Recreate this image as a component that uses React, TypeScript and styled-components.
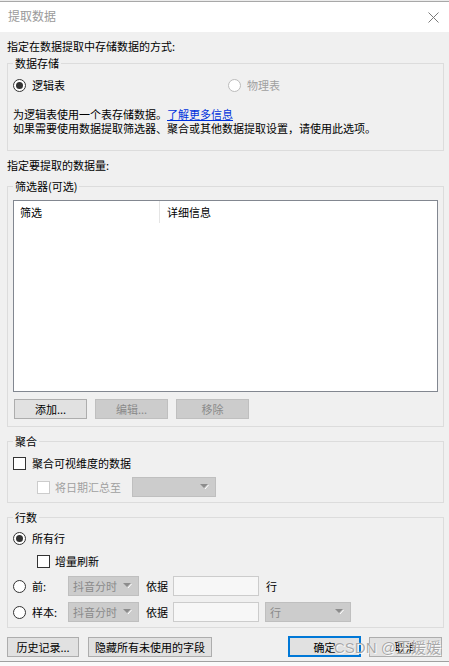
import React from 'react';
import styled, { createGlobalStyle } from 'styled-components';

const GlobalStyle = createGlobalStyle`
  html, body {
    margin: 0;
    padding: 0;
    background: #fafafa;
  }
  body {
    font-family: 'Noto Sans CJK SC', 'Noto Sans', sans-serif;
    font-size: 11px;
    color: #000000;
  }
`;

const Window = styled.div`
  position: relative;
  width: 449px;
  display: flex;
  flex-direction: column;
`;

const TopEdge = styled.div`
  height: 1px;
  background: #ececec;
  border-bottom: 1px solid #a8a8a8;
`;

const TitleBar = styled.div`
  height: 30px;
  background: #ffffff;
  display: flex;
  align-items: center;
  justify-content: space-between;
  padding: 0 10px 0 8px;
`;

const Title = styled.div`
  font-size: 12px;
  line-height: 14px;
  color: #9a9a9a;
  margin-top: -2px;
`;

const Body = styled.div`
  background: #f0f0f0;
  padding: 7px 5px 4px 7px;
  display: flex;
  flex-direction: column;
  border-bottom: 1px solid #a0a0a0;
`;

const Line = styled.div<{ $mt?: number; $pl?: number }>`
  display: flex;
  height: 14px;
  line-height: 14px;
  white-space: nowrap;
  margin-top: ${(p) => p.$mt ?? 0}px;
  padding-left: ${(p) => p.$pl ?? 0}px;
`;

const Link = styled.span`
  display: inline-block;
  line-height: 14px;
  color: #0033dd;
  text-decoration: underline;
`;

const Group = styled.div<{ $mt: number; $pt: number; $pb: number }>`
  position: relative;
  border: 1px solid #dcdcdc;
  margin-top: ${(p) => p.$mt}px;
  padding: ${(p) => p.$pt}px 5px ${(p) => p.$pb}px 5px;
  display: flex;
  flex-direction: column;
`;

const Legend = styled.span`
  position: absolute;
  top: -8px;
  left: 5px;
  padding: 0 2px;
  line-height: 14px;
  background: #f0f0f0;
`;

const Row = styled.div<{ $mt?: number; $pl?: number; $gap?: number }>`
  display: flex;
  align-items: center;
  gap: ${(p) => p.$gap ?? 0}px;
  margin-top: ${(p) => p.$mt ?? 0}px;
  padding-left: ${(p) => p.$pl ?? 0}px;
`;

const Option = styled.label<{ $w?: number; $gap?: number; $disabled?: boolean }>`
  display: flex;
  align-items: center;
  gap: ${(p) => p.$gap ?? 6}px;
  width: ${(p) => (p.$w ? `${p.$w}px` : 'auto')};
  flex-shrink: 0;
  line-height: 14px;
  white-space: nowrap;
  color: ${(p) => (p.$disabled ? '#a0a0a0' : '#000000')};
`;

const RadioCircle = styled.span<{ $checked?: boolean; $disabled?: boolean }>`
  width: 13px;
  height: 13px;
  box-sizing: border-box;
  border-radius: 50%;
  border: 1px solid ${(p) => (p.$disabled ? '#bcbcbc' : '#333333')};
  background: #ffffff;
  display: flex;
  align-items: center;
  justify-content: center;
  flex-shrink: 0;
  &::after {
    content: '';
    width: 7px;
    height: 7px;
    border-radius: 50%;
    background: ${(p) => (p.$checked ? '#333333' : 'transparent')};
  }
`;

const CheckBox = styled.span<{ $disabled?: boolean }>`
  width: 13px;
  height: 13px;
  box-sizing: border-box;
  border: 1px solid ${(p) => (p.$disabled ? '#cccccc' : '#333333')};
  background: #ffffff;
  flex-shrink: 0;
`;

const ListBox = styled.div`
  height: 192px;
  box-sizing: border-box;
  border: 1px solid #828790;
  background: #ffffff;
`;

const ListHeader = styled.div`
  display: grid;
  grid-template-columns: 146px 1fr;
  height: 22px;
`;

const HeaderCell = styled.div<{ $divider?: boolean }>`
  display: flex;
  align-items: center;
  padding-left: ${(p) => (p.$divider ? 6 : 7)}px;
  border-right: ${(p) => (p.$divider ? '1px solid #e5e5e5' : 'none')};
`;

const Button = styled.div<{ $w: number; $disabled?: boolean; $primary?: boolean; $ml?: number }>`
  width: ${(p) => p.$w}px;
  height: ${(p) => (p.$primary ? 21 : 20)}px;
  box-sizing: border-box;
  flex-shrink: 0;
  margin-left: ${(p) => p.$ml ?? 0}px;
  display: flex;
  align-items: center;
  justify-content: center;
  line-height: 14px;
  white-space: nowrap;
  background: ${(p) => (p.$disabled ? '#cccccc' : '#e1e1e1')};
  border: ${(p) =>
    p.$primary ? '2px solid #0078d7' : p.$disabled ? '1px solid #bfbfbf' : '1px solid #adadad'};
  color: ${(p) => (p.$disabled ? '#8a8a8a' : '#000000')};
`;

const Select = styled.div<{ $w: number; $ml?: number }>`
  width: ${(p) => p.$w}px;
  height: 20px;
  box-sizing: border-box;
  flex-shrink: 0;
  margin-left: ${(p) => p.$ml ?? 0}px;
  background: #cccccc;
  border: 1px solid #bfbfbf;
  display: flex;
  align-items: center;
  justify-content: space-between;
  padding: 0 6px 0 4px;
  color: #8a8a8a;
  line-height: 14px;
  white-space: nowrap;
`;

const TextBox = styled.div<{ $w: number }>`
  width: ${(p) => p.$w}px;
  height: 20px;
  box-sizing: border-box;
  flex-shrink: 0;
  background: #f7f7f7;
  border: 1px solid #cccccc;
`;

const Caption = styled.span<{ $ml?: number; $w?: number }>`
  margin-left: ${(p) => p.$ml ?? 0}px;
  width: ${(p) => (p.$w ? `${p.$w}px` : 'auto')};
  flex-shrink: 0;
  line-height: 14px;
  white-space: nowrap;
`;

const Footer = styled.div`
  display: flex;
  align-items: center;
  margin-top: 8px;
  margin-right: 2px;
  height: 21px;
`;

const Spacer = styled.div`
  flex: 1;
`;

const Watermark = styled.div`
  position: absolute;
  left: 334px;
  top: 639px;
  font-family: 'Liberation Sans', 'Noto Sans CJK SC', sans-serif;
  font-size: 15px;
  line-height: 18px;
  color: rgba(140, 140, 140, 0.75);
  text-shadow: 0 0 1px #ffffff, 1px 1px 0 rgba(255, 255, 255, 0.8);
  white-space: nowrap;
  pointer-events: none;
`;

const Arrow = () => (
  <svg width="9" height="6" viewBox="0 0 9 6">
    <path d="M0 0 H8 L4 4 Z" fill="#8c8c8c" />
    <path d="M8.5 1 L5 5" stroke="#ffffff" strokeWidth="1" />
  </svg>
);

const CloseIcon = () => (
  <svg width="11" height="11" viewBox="0 0 11 11">
    <path d="M0.5 0.5 L10.5 10.5 M10.5 0.5 L0.5 10.5" stroke="#7a7a7a" strokeWidth="1" />
  </svg>
);

export default function App() {
  return (
    <Window>
      <GlobalStyle />
      <TopEdge />
      <TitleBar>
        <Title>提取数据</Title>
        <CloseIcon />
      </TitleBar>

      <Body>
        <Line>指定在数据提取中存储数据的方式:</Line>

        <Group $mt={10} $pt={14} $pb={15}>
          <Legend>数据存储</Legend>
          <Row>
            <Option $w={215}>
              <RadioCircle $checked />
              逻辑表
            </Option>
            <Option $disabled>
              <RadioCircle $disabled />
              物理表
            </Option>
          </Row>
          <Line $mt={15}>
            <span>为逻辑表使用一个表存储数据。</span>
            <Link>了解更多信息</Link>
          </Line>
          <Line>如果需要使用数据提取筛选器、聚合或其他数据提取设置，请使用此选项。</Line>
        </Group>

        <Line $mt={7}>指定要提取的数据量:</Line>

        <Group $mt={14} $pt={13} $pb={7}>
          <Legend>筛选器(可选)</Legend>
          <ListBox>
            <ListHeader>
              <HeaderCell $divider>筛选</HeaderCell>
              <HeaderCell>详细信息</HeaderCell>
            </ListHeader>
          </ListBox>
          <Row $mt={7} $pl={1} $gap={8}>
            <Button $w={73}>添加...</Button>
            <Button $w={73} $disabled>
              编辑...
            </Button>
            <Button $w={73} $disabled>
              移除
            </Button>
          </Row>
        </Group>

        <Group $mt={14} $pt={14} $pb={5}>
          <Legend>聚合</Legend>
          <Row>
            <Option>
              <CheckBox />
              聚合可视维度的数据
            </Option>
          </Row>
          <Row $mt={7} $pl={24}>
            <Option $disabled $gap={5}>
              <CheckBox $disabled />
              将日期汇总至
            </Option>
            <Select $w={84} $ml={11}>
              <span />
              <Arrow />
            </Select>
          </Row>
        </Group>

        <Group $mt={14} $pt={13} $pb={5}>
          <Legend>行数</Legend>
          <Row>
            <Option>
              <RadioCircle $checked />
              所有行
            </Option>
          </Row>
          <Row $mt={9} $pl={24}>
            <Option $gap={5}>
              <CheckBox />
              增量刷新
            </Option>
          </Row>
          <Row $mt={8}>
            <Option $w={55}>
              <RadioCircle />
              前:
            </Option>
            <Select $w={71}>
              抖音分时
              <Arrow />
            </Select>
            <Caption $ml={7} $w={27}>
              依据
            </Caption>
            <TextBox $w={86} />
            <Caption $ml={7}>行</Caption>
          </Row>
          <Row $mt={6}>
            <Option $w={55}>
              <RadioCircle />
              样本:
            </Option>
            <Select $w={71}>
              抖音分时
              <Arrow />
            </Select>
            <Caption $ml={7} $w={27}>
              依据
            </Caption>
            <TextBox $w={86} />
            <Select $w={86} $ml={6}>
              行
              <Arrow />
            </Select>
          </Row>
        </Group>

        <Footer>
          <Button $w={72}>历史记录...</Button>
          <Button $w={124} $ml={9}>
            隐藏所有未使用的字段
          </Button>
          <Spacer />
          <Button $w={73} $primary>
            确定
          </Button>
          <Button $w={73} $ml={8}>
            取消
          </Button>
        </Footer>
      </Body>

      <Watermark>CSDN @王媛媛</Watermark>
    </Window>
  );
}
